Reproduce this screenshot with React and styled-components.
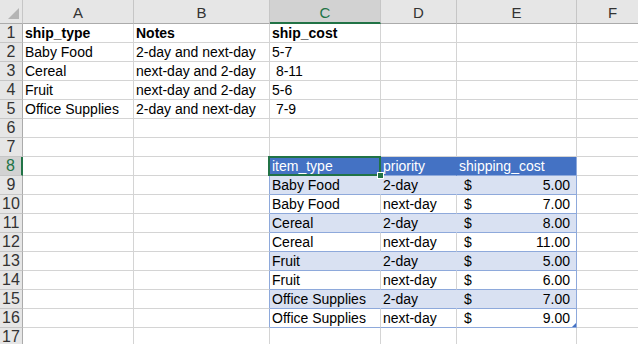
import React from "react";
import styled, { createGlobalStyle } from "styled-components";

const gridLine = "#d4d4d4";
const tableLine = "#8ea9db";
const band = "#d9e1f2";
const tableHead = "#4472c4";
const green = "#217346";

const GlobalStyle = createGlobalStyle`
  html, body {
    margin: 0;
    padding: 0;
    background: #fff;
  }
  body {
    font-family: "Liberation Sans", "Noto Sans CJK SC", sans-serif;
  }
`;

const Sheet = styled.div`
  width: 638px;
  height: 344px;
  overflow: hidden;
  display: grid;
  grid-template-columns: 23px 111px 136px 111px 76px 120px 72px;
  grid-template-rows: 24px repeat(17, 19px);
  font-size: 14px;
`;

const Corner = styled.div`
  box-sizing: border-box;
  background: #e6e6e6;
  border-right: 1px solid #c6c6c6;
  border-bottom: 1px solid #ababab;
  display: flex;
  align-items: flex-end;
  justify-content: flex-end;
  padding: 0 3px 4px 0;
`;

const ColHead = styled.div`
  box-sizing: border-box;
  background: ${p => (p.$active ? "#d2d2d2" : "#e6e6e6")};
  border-right: 1px solid #c6c6c6;
  border-bottom: ${p => (p.$active ? `2px solid ${green}` : "1px solid #ababab")};
  color: ${p => (p.$active ? green : "#333")};
  font-size: 15px;
  display: flex;
  align-items: center;
  justify-content: center;
  padding-top: 2px;
`;

const RowHead = styled.div`
  box-sizing: border-box;
  background: ${p => (p.$active ? "#d2d2d2" : "#e6e6e6")};
  border-right: ${p => (p.$active ? `2px solid ${green}` : "1px solid #ababab")};
  border-bottom: 1px solid #c6c6c6;
  color: ${p => (p.$active ? green : "#333")};
  font-size: 16px;
  line-height: 18px;
  display: flex;
  align-items: flex-end;
  justify-content: center;
`;

const Cell = styled.div`
  box-sizing: border-box;
  position: relative;
  border-right: 1px solid ${p => p.$rb || gridLine};
  border-bottom: 1px solid ${p => p.$bb || gridLine};
  background: ${p => p.$fill || "#fff"};
  color: ${p => p.$color || "#000"};
  font-weight: ${p => (p.$bold ? 700 : 400)};
  padding: 0 2px;
  line-height: 18px;
  display: flex;
  align-items: flex-end;
  white-space: pre;
  overflow: hidden;
`;

const MoneyCell = styled(Cell)`
  justify-content: space-between;
  padding: 0 6px 0 7px;
  overflow: visible;
`;

const SelectedCell = styled(Cell)`
  overflow: visible;
  z-index: 2;
  &::after {
    content: "";
    position: absolute;
    left: -2px;
    top: -1px;
    right: -1px;
    bottom: -1px;
    border: 2px solid ${green};
    pointer-events: none;
  }
`;

const FillHandle = styled.span`
  position: absolute;
  right: -4px;
  bottom: -4px;
  width: 5px;
  height: 5px;
  background: ${green};
  border: 1px solid #fff;
  z-index: 3;
`;

const ResizeHandle = styled.span`
  position: absolute;
  right: 0;
  bottom: 0;
  width: 0;
  height: 0;
  border-left: 4px solid transparent;
  border-bottom: 4px solid #4472c4;
`;

const cols = ["A", "B", "C", "D", "E", "F"];

const topRows = [
  ["ship_type", "Notes", "ship_cost"],
  ["Baby Food", "2-day and next-day", "5-7"],
  ["Cereal", "next-day and 2-day", " 8-11"],
  ["Fruit", "next-day and 2-day", "5-6"],
  ["Office Supplies", "2-day and next-day", " 7-9"]
];

const tableRows = [
  ["Baby Food", "2-day", "5.00"],
  ["Baby Food", "next-day", "7.00"],
  ["Cereal", "2-day", "8.00"],
  ["Cereal", "next-day", "11.00"],
  ["Fruit", "2-day", "5.00"],
  ["Fruit", "next-day", "6.00"],
  ["Office Supplies", "2-day", "7.00"],
  ["Office Supplies", "next-day", "9.00"]
];

const blankCells = (row, from) =>
  cols.slice(from).map(c => <Cell key={`${c}${row}`} />);

export default function App() {
  const rows = [];

  topRows.forEach((r, i) => {
    const n = i + 1;
    rows.push(
      <RowHead key={`h${n}`}>{n}</RowHead>,
      ...r.map((v, j) => (
        <Cell key={`${cols[j]}${n}`} $bold={n === 1}>
          {v}
        </Cell>
      )),
      ...blankCells(n, 3)
    );
  });

  [6, 7].forEach(n => {
    rows.push(<RowHead key={`h${n}`}>{n}</RowHead>, ...blankCells(n, 0));
  });

  // table header, row 8
  rows.push(
    <RowHead key="h8" $active>
      8
    </RowHead>,
    <Cell key="A8" />,
    <Cell key="B8" $rb={tableLine} />,
    <SelectedCell key="C8" $fill={tableHead} $rb={tableHead} $bb={tableLine} $color="#fff">
      item_type
      <FillHandle />
    </SelectedCell>,
    <Cell key="D8" $fill={tableHead} $rb={tableHead} $bb={tableLine} $color="#fff">
      priority
    </Cell>,
    <Cell key="E8" $fill={tableHead} $rb={tableLine} $bb={tableLine} $color="#fff">
      shipping_cost
    </Cell>,
    <Cell key="F8" />
  );

  tableRows.forEach((r, i) => {
    const n = i + 9;
    const fill = i % 2 === 0 ? band : "#fff";
    const inner = i % 2 === 0 ? band : gridLine;
    rows.push(
      <RowHead key={`h${n}`}>{n}</RowHead>,
      <Cell key={`A${n}`} />,
      <Cell key={`B${n}`} $rb={tableLine} />,
      <Cell key={`C${n}`} $fill={fill} $rb={inner} $bb={tableLine}>
        {r[0]}
      </Cell>,
      <Cell key={`D${n}`} $fill={fill} $rb={inner} $bb={tableLine}>
        {r[1]}
      </Cell>,
      <MoneyCell key={`E${n}`} $fill={fill} $rb={tableLine} $bb={tableLine}>
        <span>$</span>
        <span>{r[2]}</span>
        {n === 16 && <ResizeHandle />}
      </MoneyCell>,
      <Cell key={`F${n}`} />
    );
  });

  rows.push(<RowHead key="h17">17</RowHead>, ...blankCells(17, 0));

  return (
    <>
      <GlobalStyle />
      <Sheet>
        <Corner>
          <svg width="11" height="11" viewBox="0 0 11 11">
            <polygon points="11,0 11,11 0,11" fill="#b4b4b4" />
          </svg>
        </Corner>
        {cols.map(c => (
          <ColHead key={c} $active={c === "C"}>
            {c}
          </ColHead>
        ))}
        {rows}
      </Sheet>
    </>
  );
}
